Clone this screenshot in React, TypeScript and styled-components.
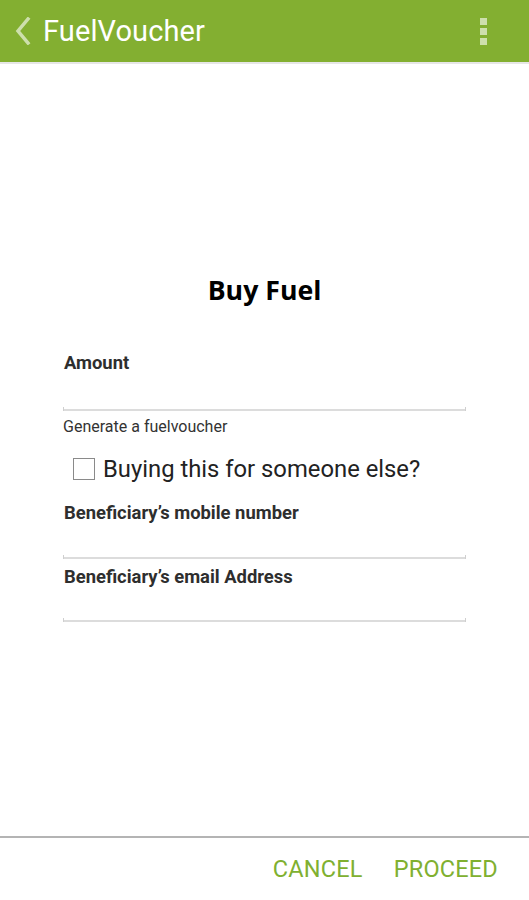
import React from "react";
import styled, { createGlobalStyle } from "styled-components";

const Global = createGlobalStyle`
  html, body { margin: 0; padding: 0; background: #ffffff; }
  body { font-family: Roboto, "Noto Sans", sans-serif; }
`;

const Screen = styled.div`
  width: 529px;
  height: 900px;
  display: flex;
  flex-direction: column;
  background: #fff;
  overflow: hidden;
`;

const ActionBar = styled.header`
  height: 62px;
  background: #83af31;
  display: flex;
  align-items: center;
  padding: 0 0 0 14px;
  border-bottom: 2px solid #e6e6e6;
  flex-shrink: 0;
`;

const BackButton = styled.div`
  width: 18px;
  height: 28px;
  display: flex;
  align-items: center;
  margin-right: 11px;
`;

const Title = styled.h1`
  margin: 0;
  font-family: Roboto, sans-serif;
  font-weight: 400;
  font-size: 29px;
  color: #ffffff;
  flex: 1;
  letter-spacing: 0.1px;
`;

const Overflow = styled.div`
  display: flex;
  flex-direction: column;
  gap: 3px;
  margin-right: 42px;
`;

const Dot = styled.span`
  display: block;
  width: 7px;
  height: 7px;
  background: rgba(255, 255, 255, 0.6);
`;

const Body = styled.main`
  flex: 1;
  display: flex;
  flex-direction: column;
  padding: 210px 63px 0 63px;
`;

const Heading = styled.h2`
  margin: 0 0 46px 0;
  text-align: center;
  font-family: "Open Sans", sans-serif;
  font-weight: 700;
  font-size: 26.7px;
  color: #000;
  line-height: 32px;
`;

const Label = styled.label`
  display: block;
  font-family: Roboto, sans-serif;
  font-weight: 700;
  font-size: 18.4px;
  line-height: 22px;
  color: #2e2e2e;
  padding-left: 1px;
`;

const Field = styled.div<{ $height: number }>`
  height: ${(p) => p.$height}px;
  position: relative;
  border-bottom: 2px solid #dcdcdc;
  width: 403px;
  box-sizing: border-box;
  &::before, &::after {
    content: "";
    position: absolute;
    bottom: -2px;
    width: 1px;
    height: 4px;
    background: #cfcfcf;
  }
  &::before { left: 0; }
  &::after { right: 0; }
`;

const Hint = styled.div`
  font-family: Roboto, sans-serif;
  font-size: 16px;
  line-height: 19px;
  color: #333;
  margin-top: 6px;
`;

const CheckRow = styled.label`
  display: flex;
  align-items: center;
  gap: 8px;
  margin: 19px 0 19px 10px;
  font-family: Roboto, sans-serif;
  font-size: 23.8px;
  color: #222;
  line-height: 28px;
`;

const Box = styled.span`
  width: 20px;
  height: 20px;
  border: 1px solid #8a8a8a;
  background: #fff;
  display: inline-block;
  flex-shrink: 0;
`;

const Group = styled.div<{ $gap: number }>`
  margin-top: ${(p) => p.$gap}px;
`;

const Footer = styled.footer`
  height: 62px;
  border-top: 2px solid #b4b4b4;
  display: flex;
  justify-content: flex-end;
  align-items: center;
  gap: 31px;
  padding-right: 31px;
  flex-shrink: 0;
`;

const ActionButton = styled.button`
  background: none;
  border: none;
  padding: 0;
  font-family: Roboto, sans-serif;
  font-size: 23.5px;
  color: #80b030;
  letter-spacing: 0.2px;
  cursor: pointer;
`;

export default function App() {
  return (
    <>
      <Global />
      <Screen>
        <ActionBar>
          <BackButton>
            <svg width="18" height="28" viewBox="0 0 18 28">
              <path d="M14 2 L4 14 L14 26" fill="none" stroke="rgba(255,255,255,0.6)" strokeWidth="3.5" strokeLinecap="square" />
            </svg>
          </BackButton>
          <Title>FuelVoucher</Title>
          <Overflow>
            <Dot />
            <Dot />
            <Dot />
          </Overflow>
        </ActionBar>
        <Body>
          <Heading>Buy Fuel</Heading>
          <Label>Amount</Label>
          <Field $height={37} />
          <Hint>Generate a fuelvoucher</Hint>
          <CheckRow>
            <Box />
            Buying this for someone else?
          </CheckRow>
          <Label>Beneficiary’s mobile number</Label>
          <Field $height={35} />
          <Group $gap={7}>
            <Label>Beneficiary’s email Address</Label>
            <Field $height={34} />
          </Group>
        </Body>
        <Footer>
          <ActionButton>CANCEL</ActionButton>
          <ActionButton>PROCEED</ActionButton>
        </Footer>
      </Screen>
    </>
  );
}
